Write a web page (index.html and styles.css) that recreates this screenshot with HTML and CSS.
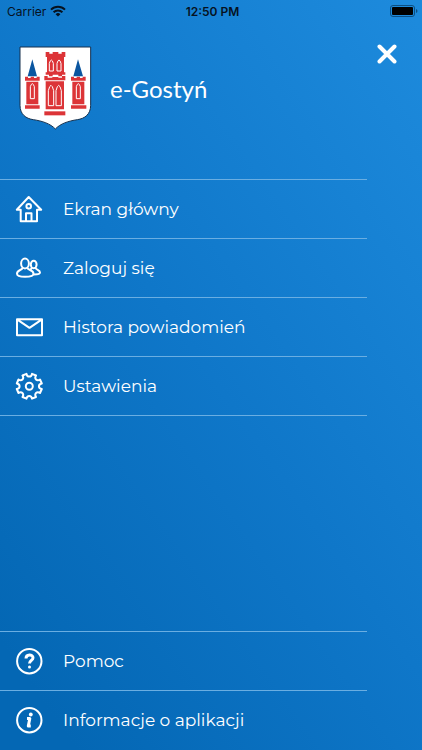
FILE: index.html
```html
<!DOCTYPE html>
<html lang="pl">
<head>
    <meta charset="UTF-8">
    <meta name="viewport" content="width=device-width, initial-scale=1.0">
    <title>e-Gostyń</title>
    <link rel="stylesheet" href="styles.css">
</head>
<body>
    <div class="status-bar">
        <div class="carrier">
            <span>Carrier</span>
            <svg width="16" height="12" viewBox="0 0 16 12" fill="none" stroke="#06121f" stroke-width="2">
                <path d="M1 4.6a10 10 0 0 1 14 0M3.6 7.2a6.3 6.3 0 0 1 8.800 0"/>
                <path d="M8 11.6 5.6 9.2a3.5 3.5 0 0 1 4.800 0z" fill="#06121f" stroke="none"/>
            </svg>
        </div>
        <span class="time">12:50 PM</span>
        <svg class="battery" width="28" height="12" viewBox="0 0 28 12">
            <rect x="0.5" y="0.5" width="24" height="11" rx="2.5" fill="none" stroke="#0c4f82"/>
            <rect x="2" y="2" width="21" height="8" rx="1" fill="#000"/>
            <path d="M26 4v4q1.500-.5 1.500-2t-1.500-2z" fill="#0c4f82"/>
        </svg>
    </div>

    <header class="header">
        <!-- town coat of arms -->
        <svg class="crest" viewBox="27 24 219 252" aria-hidden="true">
            <path d="M30 27H242V202C242 229 224 242 202 245C175 249 151 257 136 273C121 257 97 249 70 245C48 242 30 229 30 202Z" fill="#fff" stroke="#16314f" stroke-width="3"/>
            <g fill="#dc3437">
                <path d="M107 42h11v5h10v-5h17v5h10v-5h11v15h-4v46h4v7h-10v5h-11v-5h-17v5h-11v-5h-10v-7h4V57h-4z"/>
                <path d="M103 114h10v5h14v-2h18v2h11v-5h10v13h-63zM107 130h55v84h-55z"/>
                <path d="M103 220h63v12h-63z"/>
                <path d="M45 116h9v4h8v-4h10v4h8v-4h9v12H45zM49 131h36v58H49zM45 202h44v10H45zM49 189h36v10H49z"/>
                <path d="M183 116h9v4h8v-4h10v4h8v-4h9v12h-44zM187 131h36v58h-36zM183 202h46v10h-46zM187 189h36v10h-36z"/>
            </g>
            <path d="M67 64 53 115h28zM204 64l-14 51h29z" fill="#0b56a0"/>
            <g fill="#dc3437" stroke="#fff" stroke-width="3">
                <path d="M118 99V76q6-20 12 0v23zM141 99V76q6-20 12 0v23z"/>
                <path d="M115 203v-45q8-32 16 0v45zM138 203v-45q8-32 16 0v45z"/>
                <path d="M61 182v-36q6-18 12 0v36zM199 182v-36q6-18 12 0v36z"/>
            </g>
        </svg>
        <h1>e-Gostyń</h1>
        <button class="close" type="button" aria-label="Zamknij">
            <svg width="20" height="20" viewBox="0 0 20 20" fill="none" stroke="#fff" stroke-width="4" stroke-linecap="round">
                <path d="M2.500 2.500l15 15M17.500 2.500l-15 15"/>
            </svg>
        </button>
    </header>

    <nav class="menu">
        <a class="item" href="#home">
            <svg class="icon" viewBox="0 0 28 28">
                <path d="M13.700 2 1.800 14.800H5.700V26.300H22V14.800h4.200zM11 26V18.300h5.500V26"/>
                <circle cx="13.700" cy="11.200" r="2.300"/>
            </svg>
            <span>Ekran główny</span>
        </a>
        <a class="item" href="#login">
            <svg class="icon" viewBox="0 0 28 28">
                <ellipse cx="10" cy="9.500" rx="3.900" ry="4.900"/>
                <path d="M7.600 13.600C7.500 16.500 2 15.500 2 19.800c0 2 3.500 3 8 3s8.500-1 8.500-3c0-4.300-6-3.300-6.100-6.200"/>
                <ellipse cx="18.700" cy="10.500" rx="2.900" ry="3.700"/>
                <path d="M16.800 13.500c-.1 1-.7 1.600-1.500 2M20.500 13.500c.2 2.600 4.500 2 4.500 5 0 1.200-2.500 1.900-6 1.900"/>
            </svg>
            <span>Zaloguj się</span>
        </a>
        <a class="item" href="#history">
            <svg class="icon" viewBox="0 0 28 28">
                <path d="M2 6.300h25v16H2zM2 6.300l12.500 8.500L27 6.300"/>
            </svg>
            <span>Histora powiadomień</span>
        </a>
        <a class="item" href="#settings">
            <svg class="icon" viewBox="0 0 28 28">
                <path d="M11.500 1.800C12 5.500 16.500 5.500 17 1.800L21 3.500C19 6.800 21.800 9.600 25 7.500L26.800 11.500C23 12.200 23 16.300 26.800 17L25 21C21.800 18.900 19 21.700 21 25L17 26.700C16.500 23 12 23 11.500 26.700L7.500 25C9.500 21.700 6.700 18.900 3.500 21L1.800 17C5.500 16.300 5.500 12.200 1.800 11.500L3.500 7.500C6.700 9.600 9.500 6.800 7.500 3.500Z"/>
                <circle cx="14.300" cy="14.200" r="3.500"/>
            </svg>
            <span>Ustawienia</span>
        </a>
    </nav>

    <nav class="menu menu-bottom">
        <a class="item" href="#help">
            <svg class="icon" viewBox="0 0 28 28">
                <circle cx="14.300" cy="14.200" r="12.200"/>
                <path class="thick" d="M11 11.500c0-4.700 7-4.500 7-.7 0 2.700-3.500 2.500-3.500 5.700"/>
                <circle class="dot" cx="14.500" cy="20" r="1.500"/>
            </svg>
            <span>Pomoc</span>
        </a>
        <a class="item" href="#about">
            <svg class="icon" viewBox="0 0 28 28">
                <circle cx="14.300" cy="14.200" r="12.200"/>
                <path class="thick" d="M12 12.500h2.800L13.300 20h2.500M12 20h1"/>
                <circle class="dot" cx="15.800" cy="8.500" r="1.900"/>
            </svg>
            <span>Informacje o aplikacji</span>
        </a>
    </nav>
</body>
</html>
```
FILE: styles.css
```css
* {
    box-sizing: border-box;
}

body {
    display: flex;
    flex-direction: column;
    min-height: 100vh;
    margin: 0;
    font-family: Montserrat, Inter, "Noto Sans", sans-serif;
    color: #fff;
    background: linear-gradient(55deg, #0467b4 8%, #0f77c9 50%, #1d8adc 98%);
}

.status-bar {
    display: grid;
    grid-template-columns: 1fr auto 1fr;
    align-items: center;
    height: 22px;
    padding: 0 4px 0 7px;
    font-family: Inter, sans-serif;
    font-size: 12px;
    color: #06121f;
}

.carrier {
    display: flex;
    align-items: center;
    gap: 4px;
}

.time {
    font-weight: 600;
}

.battery {
    justify-self: end;
}

.header {
    display: flex;
    align-items: flex-start;
    height: 157px;
    padding: 24px 25px 0 19px;
}

.crest {
    width: 73px;
    height: 84px;
}

.header h1 {
    flex: 1;
    margin: 28px 0 0 18px;
    font-family: Lato, sans-serif;
    font-size: 24px;
    font-weight: 400;
    line-height: 30px;
}

.close {
    display: flex;
    padding: 0;
    margin-top: -2px;
    border: none;
    background: none;
    cursor: pointer;
}

.menu {
    margin-right: 55px;
    border-bottom: 1px solid #6aaee2;
}

.menu-bottom {
    margin-top: auto;
    padding-bottom: 1px;
    border-bottom: none;
}

.item {
    display: flex;
    align-items: center;
    gap: 20px;
    height: 59px;
    padding-left: 15px;
    border-top: 1px solid #6aaee2;
    font-size: 17px;
    color: #fff;
    text-decoration: none;
}

.icon {
    width: 28px;
    height: 28px;
    fill: none;
    stroke: #fff;
    stroke-width: 2;
    stroke-linejoin: round;
}

.icon .thick {
    stroke-width: 3;
}

.icon .dot {
    fill: #fff;
    stroke: none;
}
```
